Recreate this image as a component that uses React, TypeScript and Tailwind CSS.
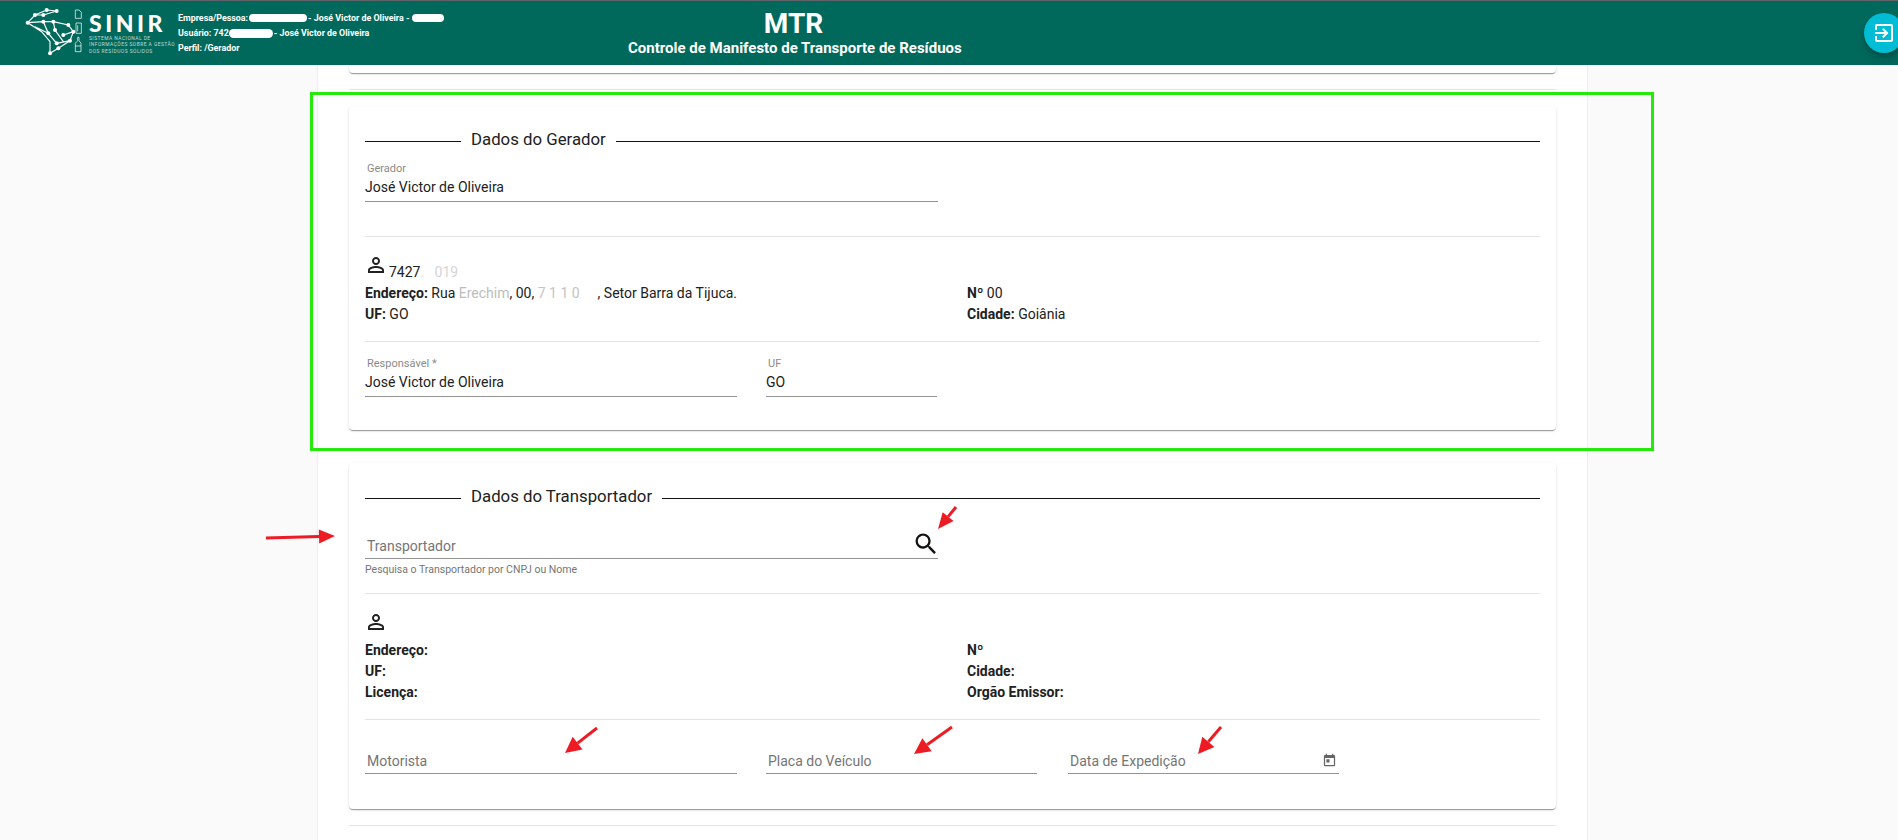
import React from 'react';
import { MdExitToApp, MdPersonOutline, MdSearch, MdToday } from 'react-icons/md';

const Divider = () => <div className="h-px bg-[#e4e4e4]" />;

const SectionTitle = ({ title }: { title: string }) => (
  <div className="flex h-5 items-start">
    <div className="mt-[9px] h-px w-[96px] bg-[#111]" />
    <span className="mx-[10px] -mt-[3px] whitespace-nowrap text-[16.8px] leading-5 text-[#212121]">{title}</span>
    <div className="mt-[9px] h-px flex-1 bg-[#111]" />
  </div>
);

const FilledField = ({ label, value, width }: { label: string; value: string; width: string }) => (
  <div className={width}>
    <div className="h-[14px] pl-[2px] text-[11px] leading-[14px] text-[#8a8a8a]">{label}</div>
    <div className="h-[26px] border-b border-[#949494] text-[14px] leading-[22px] text-[#212121]">{value}</div>
  </div>
);

const EmptyField = ({ label, width, children }: { label: string; width: string; children?: React.ReactNode }) => (
  <div className={`flex h-[27px] items-center justify-between border-b border-[#949494] pl-[2px] pt-[3px] text-[14px] text-[#757575] ${width}`}>
    <span>{label}</span>
    {children}
  </div>
);

const Line = ({ label, children }: { label: string; children?: React.ReactNode }) => (
  <div className="h-[21px] text-[14px] leading-[21px] text-[#212121]">
    <b className="font-bold">{label}</b> {children}
  </div>
);

const Logo = () => (
  <svg viewBox="0 0 210 198" className="h-[66px] w-[70px] shrink-0" fill="none" stroke="#fff" strokeWidth="3.5">
    <path d="M38 68L60 45L95 30L125 33M38 68L85 65L115 65L160 75L175 95L145 105M60 45L85 45L125 33M38 68L80 95L105 125L105 160L130 145L165 122M115 65L120 90L145 125M85 65L100 100L125 130L165 122L175 95M60 80L100 100" />
    {[[38, 68], [60, 45], [85, 45], [95, 30], [125, 33], [85, 65], [115, 65], [160, 75], [175, 95], [120, 90], [145, 105], [125, 130], [105, 160], [130, 145], [165, 122], [100, 100]].map(([cx, cy]) => (
      <circle key={`${cx}-${cy}`} cx={cx} cy={cy} r="6" fill="#fff" stroke="none" />
    ))}
    <path d="M181 30H192L199 37V55H181ZM183 69H199V100H183ZM188 76V94M188 112H192V122L198 130V155H181V130L188 122ZM181 138H198" strokeWidth="2.5" opacity="0.85" />
  </svg>
);

const Arrow = ({ x1, y1, x2, y2, head = 22, wing = 11 }: { x1: number; y1: number; x2: number; y2: number; head?: number; wing?: number }) => {
  const len = Math.hypot(x2 - x1, y2 - y1);
  const ux = (x2 - x1) / len;
  const uy = (y2 - y1) / len;
  const bx = x2 - ux * head;
  const by = y2 - uy * head;
  const points = `${x2},${y2} ${bx - uy * wing},${by + ux * wing} ${bx + uy * wing},${by - ux * wing}`;
  return (
    <g fill="#ed1c24" stroke="#ed1c24">
      <line x1={x1} y1={y1} x2={bx} y2={by} strokeWidth="3" />
      <polygon points={points} stroke="none" />
    </g>
  );
};

const Annotations = () => (
  <>
    <div className="pointer-events-none absolute left-[310px] top-[92px] h-[359px] w-[1344px] border-[3px] border-[#27e80c]" />
    <svg className="pointer-events-none absolute left-0 top-0 h-[840px] w-[1898px]" viewBox="0 0 1898 840">
      <Arrow x1={266} y1={538} x2={335} y2={536} head={16} wing={7} />
      <Arrow x1={956} y1={507} x2={938} y2={529} head={16} wing={7} />
      <Arrow x1={597} y1={728} x2={565} y2={753} head={16} wing={8} />
      <Arrow x1={952} y1={727} x2={914} y2={754} head={16} wing={8} />
      <Arrow x1={1221} y1={727} x2={1198} y2={754} head={16} wing={8} />
    </svg>
  </>
);

const cardClass =
  'rounded-[4px] bg-white px-4 shadow-[0_2px_1px_-1px_rgba(0,0,0,0.25),0_1px_1px_0_rgba(0,0,0,0.14),0_1px_3px_0_rgba(0,0,0,0.12)]';

const App = () => {
  return (
    <div className="relative h-[840px] w-[1898px] overflow-hidden bg-[#fafafa] font-['Roboto',sans-serif]">
      {/* Header */}
      <header className="flex h-[65px] items-center border-t border-[#5f6368] bg-[#00695c] text-white">
        <div className="flex w-[628px] shrink-0 items-center pl-[15px]">
          <Logo />
          <div className="ml-[4px] w-[89px] shrink-0">
            <div className="font-['Lato',sans-serif] text-[23px] font-black leading-[22px] tracking-[3.5px]">SINIR</div>
            <div className="mt-[1px] whitespace-nowrap text-[4.9px] leading-[6.5px] tracking-[0.47px] text-white/75">
              SISTEMA NACIONAL DE
              <br />
              INFORMAÇÕES SOBRE A GESTÃO
              <br />
              DOS RESÍDUOS SÓLIDOS
            </div>
          </div>
          <div className="whitespace-nowrap text-[8.9px] font-bold leading-[15px]">
            <div className="flex items-center">
              Empresa/Pessoa:
              <span className="mx-[1px] inline-block h-[8px] w-[58px] rounded-full bg-white" />- José Victor de Oliveira -
              <span className="ml-[3px] inline-block h-[8px] w-[32px] rounded-full bg-white" />
            </div>
            <div className="flex items-center">
              Usuário: 742
              <span className="mr-[1px] inline-block h-[9px] w-[44px] rounded-full bg-white" />- José Victor de Oliveira
            </div>
            <div>Perfil: /Gerador</div>
          </div>
        </div>
        <div className="w-[331px] shrink-0 text-center">
          <div className="text-[28px] font-bold leading-[30px]">MTR</div>
          <div className="whitespace-nowrap text-[15px] font-bold leading-[18px]">Controle de Manifesto de Transporte de Resíduos</div>
        </div>
        <div className="flex flex-1 justify-end">
          <button className="-mr-[6px] flex h-10 w-10 shrink-0 items-center justify-center rounded-full bg-[#00bcd4] shadow-[0_3px_5px_-1px_rgba(0,0,0,0.2),0_6px_10px_0_rgba(0,0,0,0.14)]">
            <MdExitToApp size={24} color="#fff" />
          </button>
        </div>
      </header>

      <main className="ml-[317px] h-[775px] w-[1271px] border-x border-[#eeeeee] bg-white px-[31px]">
        <div className={`h-[8px] rounded-t-none ${cardClass}`} />
        <div className="mt-4">
          <Divider />
        </div>

        {/* Dados do Gerador */}
        <section className={`mt-4 h-[324px] pt-[26px] ${cardClass}`}>
          <SectionTitle title="Dados do Gerador" />
          <div className="mt-[10px]">
            <FilledField label="Gerador" value="José Victor de Oliveira" width="w-[573px]" />
          </div>
          <div className="mt-[34px]">
            <Divider />
          </div>
          <div className="mt-4 flex h-6 items-end">
            <MdPersonOutline size={24} className="-ml-[1px] shrink-0 text-[#212121]" />
            <span className="-mb-[5px] ml-[1px] text-[14px] leading-5 text-[#212121]">
              7427<span className="text-[#d5d5d5]">.&nbsp;&nbsp;&nbsp;019</span>
            </span>
          </div>
          <div className="mt-[6px] grid grid-cols-[602px_1fr]">
            <div>
              <Line label="Endereço:">
                Rua <span className="text-[#bdbdbd]">Erechim</span>, 00, <span className="text-[#c4c4c4]">7 1 1 0</span>
                <span className="inline-block w-[18px]" />, Setor Barra da Tijuca.
              </Line>
              <Line label="UF:">GO</Line>
            </div>
            <div>
              <Line label="Nº">00</Line>
              <Line label="Cidade:">Goiânia</Line>
            </div>
          </div>
          <div className="mt-4">
            <Divider />
          </div>
          <div className="mt-[15px] flex gap-[29px]">
            <FilledField label="Responsável *" value="José Victor de Oliveira" width="w-[372px]" />
            <FilledField label="UF" value="GO" width="w-[171px]" />
          </div>
        </section>

        {/* Dados do Transportador */}
        <section className={`mt-[33px] h-[346px] pt-[26px] ${cardClass}`}>
          <SectionTitle title="Dados do Transportador" />
          <div className="mt-[23px] w-[573px]">
            <EmptyField label="Transportador" width="w-full">
              <MdSearch size={28} className="-mr-[2px] -mt-[6px] shrink-0 text-[#111]" />
            </EmptyField>
            <div className="mt-[3px] text-[10.5px] leading-4 text-[#757575]">Pesquisa o Transportador por CNPJ ou Nome</div>
          </div>
          <div className="mt-[15px]">
            <Divider />
          </div>
          <div className="mt-4 flex h-6 items-end">
            <MdPersonOutline size={24} className="-ml-[1px] shrink-0 text-[#212121]" />
          </div>
          <div className="mt-[6px] grid grid-cols-[602px_1fr]">
            <div>
              <Line label="Endereço:" />
              <Line label="UF:" />
              <Line label="Licença:" />
            </div>
            <div>
              <Line label="Nº" />
              <Line label="Cidade:" />
              <Line label="Orgão Emissor:" />
            </div>
          </div>
          <div className="mt-4">
            <Divider />
          </div>
          <div className="mt-[27px] flex">
            <EmptyField label="Motorista" width="w-[372px]" />
            <div className="ml-[29px]">
              <EmptyField label="Placa do Veículo" width="w-[271px]" />
            </div>
            <div className="ml-[31px]">
              <EmptyField label="Data de Expedição" width="w-[271px]">
                <MdToday size={15} className="mr-[2px] -mt-[3px] shrink-0 text-[#666]" />
              </EmptyField>
            </div>
          </div>
        </section>

        <div className="mt-4">
          <Divider />
        </div>
      </main>

      <Annotations />
    </div>
  );
};

export default App;
